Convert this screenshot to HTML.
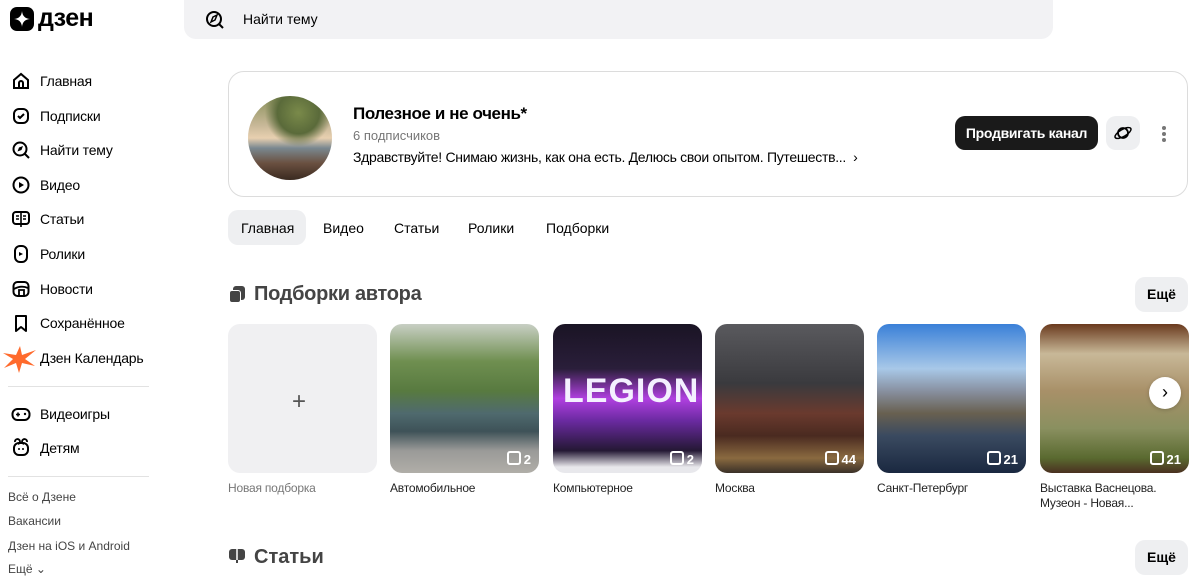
<!DOCTYPE html>
<html><head><meta charset="utf-8"><style>
*{margin:0;padding:0;box-sizing:border-box}
body{width:1200px;height:575px;overflow:hidden;background:#fff;font-family:"Liberation Sans",sans-serif;color:#000;position:relative}
.a{position:absolute}
.nav{position:absolute;left:40px;font-size:14px;letter-spacing:-0.2px}
.ic{position:absolute;left:11px;width:20px;height:20px}
.foot{position:absolute;left:8px;font-size:12px;color:#444}
.card{position:absolute;top:324px;width:149px;height:149px;border-radius:12px;overflow:hidden}
.cnt{position:absolute;right:8px;bottom:6px;color:#fff;font-weight:bold;font-size:13px}
.cnt:before{content:"";display:inline-block;width:10px;height:10px;border:2px solid #fff;border-radius:3px;margin-right:3px;vertical-align:-1px}
.lbl{position:absolute;top:481px;font-size:12px;color:#222;line-height:15px;letter-spacing:-0.2px}
.tab{position:absolute;top:220px;font-size:14px}
.btn{position:absolute;background:#eeeff1;border-radius:10px}
</style></head><body>
<div class="a" style="left:10px;top:7px;width:24px;height:24px;background:#000;border-radius:7px"></div>
<svg class="a" style="left:10px;top:7px" width="24" height="24"><path d="M12 4 Q12.6 11.4 20 12 Q12.6 12.6 12 20 Q11.4 12.6 4 12 Q11.4 11.4 12 4Z" fill="#fff"/></svg>
<div class="a" style="left:38px;top:4px;font-size:25px;font-weight:bold;letter-spacing:-0.5px">дзен</div>
<div class="a" style="left:184px;top:0;width:869px;height:39px;background:#f2f2f4;border-radius:0 0 12px 12px"></div>
<svg class="a" style="left:204px;top:9px" width="22" height="22"><circle cx="10" cy="10" r="7" fill="none" stroke="#000" stroke-width="2"/><path d="M15 15l4 4" stroke="#000" stroke-width="2"/><path d="M7 13l2-5 4-2-2 5z" fill="none" stroke="#000" stroke-width="1.5"/></svg>
<div class="a" style="left:243px;top:11px;font-size:14px">Найти тему</div>
<svg class="ic" style="top:71px" viewBox="0 0 20 20"><path d="M3 9 L10 3 L17 9 V17 H3Z M8 17 V12 a2 2 0 0 1 4 0 V17" fill="none" stroke="#000" stroke-width="2"/></svg><div class="nav" style="top:73px">Главная</div>
<svg class="ic" style="top:106px" viewBox="0 0 20 20"><rect x="3" y="3" width="14" height="14" rx="5" fill="none" stroke="#000" stroke-width="2"/><path d="M7 10l2 2 4-4" fill="none" stroke="#000" stroke-width="2"/></svg><div class="nav" style="top:108px">Подписки</div>
<svg class="ic" style="top:140px" viewBox="0 0 20 20"><circle cx="9" cy="9" r="6.5" fill="none" stroke="#000" stroke-width="2"/><path d="M14 14l4 4" stroke="#000" stroke-width="2"/><path d="M6.5 11.5l1.5-4 4-1.5-1.5 4z" fill="#000"/></svg><div class="nav" style="top:142px">Найти тему</div>
<svg class="ic" style="top:175px" viewBox="0 0 20 20"><circle cx="10" cy="10" r="7.5" fill="none" stroke="#000" stroke-width="2"/><path d="M8 7l5 3-5 3z" fill="#000"/></svg><div class="nav" style="top:177px">Видео</div>
<svg class="ic" style="top:209px" viewBox="0 0 20 20"><rect x="2" y="3" width="16" height="12" rx="3" fill="none" stroke="#000" stroke-width="2"/><path d="M10 3v15M5 7h3M5 10h3M12 7h3M12 10h3" stroke="#000" stroke-width="1.6"/></svg><div class="nav" style="top:211px">Статьи</div>
<svg class="ic" style="top:244px" viewBox="0 0 20 20"><rect x="4" y="2" width="12" height="16" rx="5" fill="none" stroke="#000" stroke-width="2"/><path d="M8 8l4 2-4 2z" fill="#000"/></svg><div class="nav" style="top:246px">Ролики</div>
<svg class="ic" style="top:279px" viewBox="0 0 20 20"><rect x="2.5" y="3" width="15" height="14" rx="4" fill="none" stroke="#000" stroke-width="2"/><path d="M3 10 Q10 6 17 9 M8 17 V11 H13 V17" fill="none" stroke="#000" stroke-width="1.8"/></svg><div class="nav" style="top:281px">Новости</div>
<svg class="ic" style="top:313px" viewBox="0 0 20 20"><path d="M5 3h10v15l-5-4-5 4z" fill="none" stroke="#000" stroke-width="2" stroke-linejoin="round"/></svg><div class="nav" style="top:315px">Сохранённое</div>
<svg class="a" style="left:2px;top:344px" width="36" height="30" viewBox="0 0 36 30"><path d="M18 2 L20 11 L34 6 L23 15 L33 22 L20 19 L17 29 L14 19 L2 24 L11 15 L1 9 L14 11Z" fill="#ff6a2c"/></svg><div class="nav" style="top:350px">Дзен Календарь</div>
<div class="a" style="left:8px;top:386px;width:141px;height:1px;background:#e2e2e2"></div>
<svg class="ic" style="top:404px" viewBox="0 0 20 20"><rect x="1.5" y="5" width="17" height="11" rx="5" fill="none" stroke="#000" stroke-width="2"/><path d="M5 10.5h4M7 8.5v4" stroke="#000" stroke-width="1.6"/><circle cx="14" cy="10" r="1.2"/></svg><div class="nav" style="top:406px">Видеоигры</div>
<svg class="ic" style="top:438px" viewBox="0 0 20 20"><path d="M4 4a2.5 2.5 0 1 1 3 2M16 4a2.5 2.5 0 1 0-3 2" fill="none" stroke="#000" stroke-width="1.8"/><rect x="3" y="5" width="14" height="12" rx="5" fill="none" stroke="#000" stroke-width="2"/><circle cx="8" cy="11" r="1"/><circle cx="12" cy="11" r="1"/></svg><div class="nav" style="top:440px">Детям</div>
<div class="a" style="left:8px;top:476px;width:141px;height:1px;background:#e2e2e2"></div>
<div class="foot" style="top:490px">Всё о Дзене</div>
<div class="foot" style="top:514px">Вакансии</div>
<div class="foot" style="top:539px">Дзен на iOS и Android</div>
<div class="foot" style="top:562px">Ещё ⌄</div>
<div class="a" style="left:228px;top:71px;width:960px;height:126px;border:1px solid #dcdcdc;border-radius:16px"></div>
<div class="a" style="left:248px;top:96px;width:84px;height:84px;border-radius:50%;background:radial-gradient(circle at 60% 20%,#7a8a4a 0,#5a6a3a 25%,transparent 40%),linear-gradient(180deg,#88905a 0%,#c8b898 35%,#e8d0b0 50%,#7a8890 62%,#6a5040 80%,#3a2a20 100%)"></div>
<div class="a" style="left:353px;top:104px;font-size:17px;font-weight:bold;letter-spacing:-0.4px">Полезное и не очень*</div>
<div class="a" style="left:353px;top:128px;font-size:13px;color:#777">6 подписчиков</div>
<div class="a" style="left:353px;top:149px;font-size:14px;letter-spacing:-0.3px">Здравствуйте! Снимаю жизнь, как она есть. Делюсь свои опытом. Путешеств... &nbsp;›</div>
<div class="a" style="left:955px;top:116px;width:143px;height:34px;background:#1a1a1a;border-radius:10px;color:#fff;font-size:14px;font-weight:bold;text-align:center;line-height:34px;letter-spacing:-0.3px">Продвигать канал</div>
<div class="btn" style="left:1106px;top:116px;width:34px;height:34px"></div>
<svg class="a" style="left:1113px;top:123px" width="20" height="20"><circle cx="10" cy="10" r="5" fill="none" stroke="#000" stroke-width="1.8"/><ellipse cx="10" cy="10" rx="9" ry="3.5" transform="rotate(-30 10 10)" fill="none" stroke="#000" stroke-width="1.5"/></svg>
<div class="a" style="left:1162px;top:126px;width:4px;height:4px;background:#777;border-radius:50%;box-shadow:0 6px 0 #777,0 12px 0 #777"></div>
<div class="btn" style="left:228px;top:210px;width:78px;height:35px"></div>
<div class="tab" style="left:241px">Главная</div>
<div class="tab" style="left:323px">Видео</div>
<div class="tab" style="left:394px">Статьи</div>
<div class="tab" style="left:468px">Ролики</div>
<div class="tab" style="left:546px">Подборки</div>
<div class="a" style="left:233px;top:286px;width:12px;height:14px;background:#444;border-radius:3px"></div>
<div class="a" style="left:229px;top:290px;width:12px;height:13px;background:#444;border-radius:3px;border:1.5px solid #fff"></div>
<div class="a" style="left:254px;top:283px;font-size:20px;font-weight:bold;color:#444;letter-spacing:-0.3px">Подборки автора</div>
<div class="btn" style="left:1135px;top:277px;width:53px;height:35px;font-size:14px;font-weight:bold;text-align:center;line-height:35px">Ещё</div>
<div class="card" style="left:228px;background:#f0f0f2"><div class="a" style="left:64px;top:64px;font-size:24px;color:#555;font-weight:300">+</div></div>
<div class="card" style="left:390px;background:linear-gradient(180deg,#c8cfc4 0%,#6f8f50 25%,#587a40 45%,#4f6a6e 60%,#3e5258 72%,#9a9a98 85%,#b0aea8 100%)"><div class="cnt">2</div></div>
<div class="card" style="left:553px;background:linear-gradient(180deg,#1a1424 0%,#2a1e3a 30%,#b040e0 50%,#6a2aa0 65%,#241834 85%,#e8e8ec 96%)"><div class="a" style="left:10px;top:48px;font-size:34px;font-weight:bold;color:#f4f0ff;letter-spacing:1px">LEGION</div><div class="cnt">2</div></div>
<div class="card" style="left:715px;background:linear-gradient(180deg,#5a5a5e 0%,#3a3a3e 40%,#6a3a2e 60%,#4a2a20 75%,#8a6a40 90%,#3a3028 100%)"><div class="cnt">44</div></div>
<div class="card" style="left:877px;background:linear-gradient(180deg,#3a80d8 0%,#a8c8e8 30%,#8890a0 45%,#686050 60%,#3a4a60 75%,#1a2840 100%)"><div class="cnt">21</div></div>
<div class="card" style="left:1040px;background:linear-gradient(180deg,#6a3a1e 0%,#c8b898 20%,#a89068 45%,#8a9060 70%,#5a6a30 90%,#4a3020 100%)"><div class="cnt">21</div></div>
<div class="a" style="left:1149px;top:377px;width:32px;height:32px;border-radius:50%;background:#fff;box-shadow:0 1px 4px rgba(0,0,0,.2);text-align:center;line-height:30px;font-size:18px">›</div>
<div class="lbl" style="left:228px;color:#777">Новая подборка</div>
<div class="lbl" style="left:390px">Автомобильное</div>
<div class="lbl" style="left:553px">Компьютерное</div>
<div class="lbl" style="left:715px">Москва</div>
<div class="lbl" style="left:877px">Санкт-Петербург</div>
<div class="lbl" style="left:1040px">Выставка Васнецова.<br>Музеон - Новая...</div>
<svg class="a" style="left:228px;top:548px" width="18" height="16"><rect x="1" y="1" width="16" height="11" rx="3" fill="#444"/><path d="M9 1v14" stroke="#fff" stroke-width="1.5"/><path d="M9 12v3" stroke="#444" stroke-width="2"/></svg>
<div class="a" style="left:254px;top:546px;font-size:20px;font-weight:bold;color:#444">Статьи</div>
<div class="btn" style="left:1135px;top:540px;width:53px;height:35px;font-size:14px;font-weight:bold;text-align:center;line-height:35px">Ещё</div>
</body></html>
